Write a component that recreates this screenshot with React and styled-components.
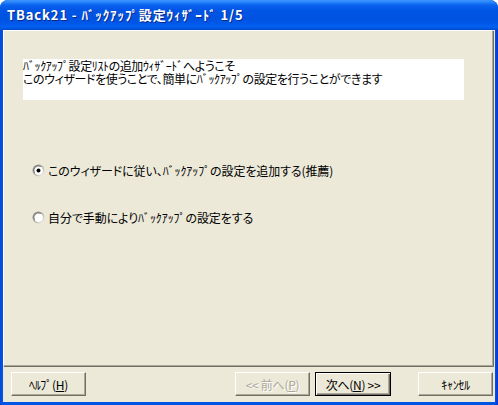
import React from 'react';
import styled, { createGlobalStyle } from 'styled-components';

const GlobalStyle = createGlobalStyle`
  html, body {
    margin: 0;
    padding: 0;
    background: #ffffff;
  }
`;

const uiFont = `"Noto Sans CJK JP", "Liberation Sans", sans-serif`;

const Window = styled.div`
  width: 498px;
  height: 405px;
  display: flex;
  flex-direction: column;
  border-radius: 8px 8px 0 0;
  overflow: hidden;
  background: linear-gradient(to right, #0842d6 0px, #0054e3 2px, #0054e3 495px, #0831d9 498px);
  font-family: ${uiFont};
  font-feature-settings: "palt";
`;

const TitleBar = styled.div`
  flex: none;
  height: 30px;
  display: flex;
  align-items: center;
  padding: 0 0 1px 7px;
  box-sizing: border-box;
  background: linear-gradient(to bottom,
    #3d95ff 0px, #2a86fb 2px, #0a64ef 5px, #0055e5 10px,
    #0052e0 18px, #0058ea 24px, #0061f1 27px, #0051d8 29px, #0046c8 30px);
  color: #ffffff;
  font-size: 13px;
  font-weight: bold;
  letter-spacing: 0.9px;
  text-shadow: 1px 1px 0 #0a2a8a;
  white-space: nowrap;
`;

const Frame = styled.div`
  flex: 1;
  display: flex;
  flex-direction: column;
  margin: 0 3px 3px 3px;
  background: #ece9d8;
`;

const Panel = styled.div`
  height: 336px;
  margin-right: 2px;
  box-sizing: border-box;
  border-top: 1px solid #ffffff;
  border-left: 1px solid #ffffff;
  border-right: 1px solid #aca899;
  border-bottom: 1px solid #aca899;
  box-shadow: 1px 1px 0 #716f64;
  padding: 28px 0 0 19px;
`;

const Banner = styled.div`
  width: 441px;
  height: 41px;
  box-sizing: border-box;
  background: #ffffff;
  color: #000000;
  font-size: 12px;
  line-height: 13px;
  letter-spacing: -0.4px;
`;

const BannerLine = styled.div`
  white-space: nowrap;
`;

const Options = styled.div`
  display: flex;
  flex-direction: column;
  gap: 34px;
  margin: 64px 0 0 9px;
`;

const RadioRow = styled.label`
  display: flex;
  align-items: center;
  gap: 3px;
  height: 13px;
  font-size: 12px;
  letter-spacing: -0.1px;
  color: #000000;
  white-space: nowrap;
`;

const ButtonRow = styled.div`
  display: flex;
  padding: 6px 2px 0 8px;
`;

const Button = styled.div`
  width: ${p => p.$w || 75}px;
  height: 24px;
  box-sizing: border-box;
  display: flex;
  align-items: center;
  justify-content: center;
  font-size: 12px;
  letter-spacing: -0.3px;
  white-space: nowrap;
  background: #ece9d8;
  color: ${p => (p.$disabled ? '#aca899' : '#000000')};
  text-shadow: ${p => (p.$disabled ? '1px 1px 0 #ffffff' : 'none')};
  border-top: 1px solid ${p => (p.$default ? '#000000' : '#ffffff')};
  border-left: 1px solid ${p => (p.$default ? '#000000' : '#ffffff')};
  border-right: 1px solid ${p => (p.$default ? '#000000' : '#716f64')};
  border-bottom: 1px solid ${p => (p.$default ? '#000000' : '#716f64')};
  box-shadow: ${p => (p.$default
    ? 'inset 1px 1px 0 #ffffff, inset -1px -1px 0 #716f64, inset -2px -2px 0 #aca899'
    : 'inset -1px -1px 0 #aca899')};
  margin-left: ${p => p.$gap || 0}px;
`;

const Key = styled.span`
  text-decoration: underline;
  text-underline-offset: 1px;
`;

const Radio = ({ checked }) => (
  <svg width="13" height="13" viewBox="0 0 13 13">
    <defs>
      <linearGradient id="ring" x1="0" y1="0" x2="1" y2="1">
        <stop offset="0" stopColor="#808080" />
        <stop offset="0.55" stopColor="#b8b4a6" />
        <stop offset="1" stopColor="#ffffff" />
      </linearGradient>
    </defs>
    <circle cx="6.5" cy="6.5" r="6" fill="url(#ring)" />
    <circle cx="6.5" cy="6.5" r="4.5" fill="#ffffff" />
    <path d="M2.6 8.8 A4.5 4.5 0 0 1 8.8 2.6" stroke="#404040" strokeWidth="1" fill="none" opacity="0.6" />
    {checked && <circle cx="6.5" cy="6.5" r="2" fill="#000000" />}
  </svg>
);

export default function App() {
  return (
    <>
      <GlobalStyle />
      <Window>
        <TitleBar>TBack21 - ﾊﾞｯｸｱｯﾌﾟ設定ｳｨｻﾞｰﾄﾞ 1/5</TitleBar>
        <Frame>
          <Panel>
            <Banner>
              <BannerLine>ﾊﾞｯｸｱｯﾌﾟ設定ﾘｽﾄの追加ｳｨｻﾞｰﾄﾞへようこそ</BannerLine>
              <BannerLine>このウィザードを使うことで、簡単にﾊﾞｯｸｱｯﾌﾟの設定を行うことができます</BannerLine>
            </Banner>
            <Options>
              <RadioRow>
                <Radio checked />
                このウィザードに従い、ﾊﾞｯｸｱｯﾌﾟの設定を追加する(推薦)
              </RadioRow>
              <RadioRow>
                <Radio />
                自分で手動によりﾊﾞｯｸｱｯﾌﾟの設定をする
              </RadioRow>
            </Options>
          </Panel>
          <ButtonRow>
            <Button>ﾍﾙﾌﾟ(<Key>H</Key>)</Button>
            <Button $disabled $gap={149}>&lt;&lt; 前へ(<Key>P</Key>)</Button>
            <Button $default $w={76} $gap={5}>次へ(<Key>N</Key>) &gt;&gt;</Button>
            <Button $gap={27}>ｷｬﾝｾﾙ</Button>
          </ButtonRow>
        </Frame>
      </Window>
    </>
  );
}
